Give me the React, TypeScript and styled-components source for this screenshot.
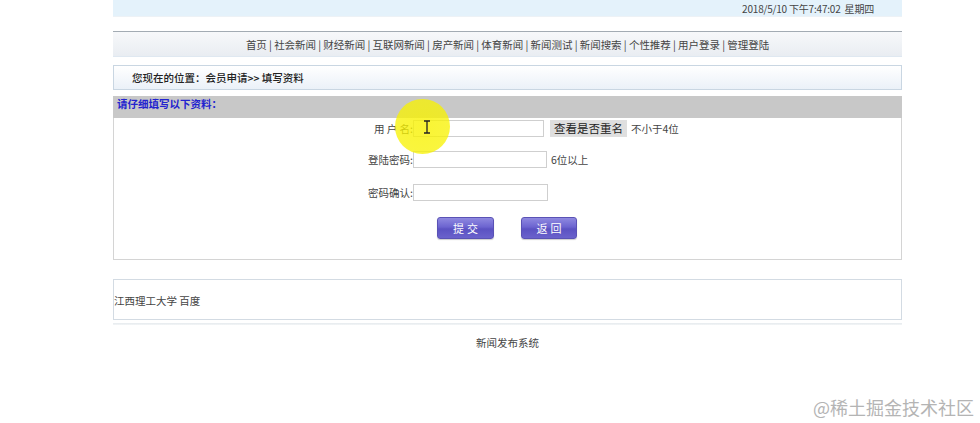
import React from "react";
import styled, { createGlobalStyle } from "styled-components";

const Global = createGlobalStyle`
  html, body { margin: 0; padding: 0; background: #fff; }
  body {
    font-family: "Noto Sans CJK SC", "Microsoft YaHei", "Noto Sans", sans-serif;
    font-size: 10.5px;
    color: #333;
  }
`;

const Page = styled.div`
  position: relative;
  width: 980px;
  height: 423px;
  overflow: hidden;
`;

const Wrap = styled.div`
  margin-left: 113px;
  width: 789px;
  display: flex;
  flex-direction: column;
`;

const TopBar = styled.div`
  height: 16px;
  line-height: 17px;
  background: #e4f2fb;
  border-bottom: 1px solid #edf2f6;
  text-align: right;
  padding-right: 28px;
  color: #444;
  font-size: 10px;
  letter-spacing: -0.2px;
  white-space: pre;
`;

const NavBar = styled.div`
  margin-top: 14px;
  height: 24px;
  line-height: 25px;
  border-top: 1px solid #a3abb3;
  border-bottom: 1px solid #dfe8f1;
  background: linear-gradient(#f7f8fa, #e9edf2);
  text-align: center;
  color: #444;
  letter-spacing: -0.05px;
  white-space: pre;
`;

const LocationBar = styled.div`
  margin-top: 8px;
  height: 23px;
  line-height: 24px;
  border: 1px solid #c9d6e2;
  background: linear-gradient(#ffffff, #ebf1f8);
  padding-left: 18px;
  color: #222;
  font-weight: 500;
`;

const FormHeader = styled.div`
  margin-top: 6px;
  height: 22px;
  line-height: 15px;
  background: #c8c8c8;
  padding-left: 4px;
  color: #2323cf;
  font-weight: 600;
`;

const FormBody = styled.div`
  border: 1px solid #d4d4d4;
  border-top: none;
  padding-bottom: 20px;
  display: flex;
  flex-direction: column;
`;

const Row = styled.div<{ $mt: number }>`
  display: flex;
  align-items: center;
  height: 20px;
  margin-top: ${(p) => p.$mt}px;
`;

const Label = styled.div`
  width: 299px;
  text-align: right;
  color: #444;
  white-space: pre;
`;

const Input = styled.input<{ $w: number }>`
  box-sizing: border-box;
  width: ${(p) => p.$w}px;
  height: 17px;
  border: 1px solid #cfcfcf;
  background: #fff;
  padding: 0;
  margin: 0;
  outline: none;
`;

const Hint = styled.span`
  margin-left: 4px;
  color: #444;
`;

const CheckButton = styled.button`
  margin-left: 6px;
  width: 77px;
  height: 17px;
  border: none;
  background: #dfdfdf;
  font-family: inherit;
  font-size: 11.5px;
  color: #222;
  padding: 0;
  line-height: 17px;
`;

const ButtonRow = styled.div`
  display: flex;
  gap: 27px;
  padding-left: 323px;
  margin-top: 15px;
`;

const PurpleButton = styled.button<{ $w: number }>`
  width: ${(p) => p.$w}px;
  height: 22px;
  border: 1px solid #5a52b5;
  border-radius: 3px;
  background: linear-gradient(#8f89e0 0%, #6c64d0 45%, #5b52c2 55%, #6a62cc 100%);
  color: #fff;
  font-family: inherit;
  font-size: 11px;
  letter-spacing: 3px;
  padding: 0 0 0 3px;
  box-shadow: 0 1px 1px rgba(0, 0, 0, 0.2);
`;

const FooterBox = styled.div`
  margin-top: 19px;
  height: 39px;
  line-height: 42px;
  border: 1px solid #d3dbe3;
  color: #444;
`;

const FooterLine = styled.div`
  margin-top: 3px;
  height: 2px;
  background: linear-gradient(#e6eaee, #f3f5f7);
`;

const Copyright = styled.div`
  margin-top: 10px;
  text-align: center;
  color: #444;
`;

const Watermark = styled.div`
  position: absolute;
  right: 6px;
  top: 394px;
  font-size: 18px;
  color: #b4b4b4;
  white-space: nowrap;
`;

const Highlight = styled.div`
  position: absolute;
  left: 395px;
  top: 99px;
  width: 55px;
  height: 55px;
  border-radius: 50%;
  background: radial-gradient(circle, rgba(248, 242, 0, 0.8) 0%, rgba(248, 242, 0, 0.75) 85%, rgba(248, 242, 0, 0) 100%);
  pointer-events: none;
`;

const Cursor = styled.svg`
  position: absolute;
  left: 423px;
  top: 120px;
`;

export default function App() {
  const nav = [
    "首页",
    "社会新闻",
    "财经新闻",
    "互联网新闻",
    "房产新闻",
    "体育新闻",
    "新闻测试",
    "新闻搜索",
    "个性推荐",
    "用户登录",
    "管理登陆",
  ];
  return (
    <Page>
      <Global />
      <Wrap>
        <TopBar>2018/5/10 下午7:47:02  星期四</TopBar>
        <NavBar>{nav.join(" | ")}</NavBar>
        <LocationBar>您现在的位置：会员申请&gt;&gt; 填写资料</LocationBar>
        <FormHeader>请仔细填写以下资料：</FormHeader>
        <FormBody>
          <Row $mt={0}>
            <Label>用 户 名:</Label>
            <Input $w={131} />
            <CheckButton>查看是否重名</CheckButton>
            <Hint>不小于4位</Hint>
          </Row>
          <Row $mt={11}>
            <Label>登陆密码:</Label>
            <Input $w={134} type="password" />
            <Hint>6位以上</Hint>
          </Row>
          <Row $mt={13}>
            <Label>密码确认:</Label>
            <Input $w={135} type="password" />
          </Row>
          <ButtonRow>
            <PurpleButton $w={57}>提交</PurpleButton>
            <PurpleButton $w={56}>返回</PurpleButton>
          </ButtonRow>
        </FormBody>
        <FooterBox>江西理工大学 百度</FooterBox>
        <FooterLine />
        <Copyright>新闻发布系统</Copyright>
      </Wrap>
      <Highlight />
      <Cursor width="8" height="14" viewBox="0 0 8 14">
        <path d="M1 1 H7 M4 1 V13 M1 13 H7" stroke="#222" strokeWidth="1.3" fill="none" />
      </Cursor>
      <Watermark>@稀土掘金技术社区</Watermark>
    </Page>
  );
}
